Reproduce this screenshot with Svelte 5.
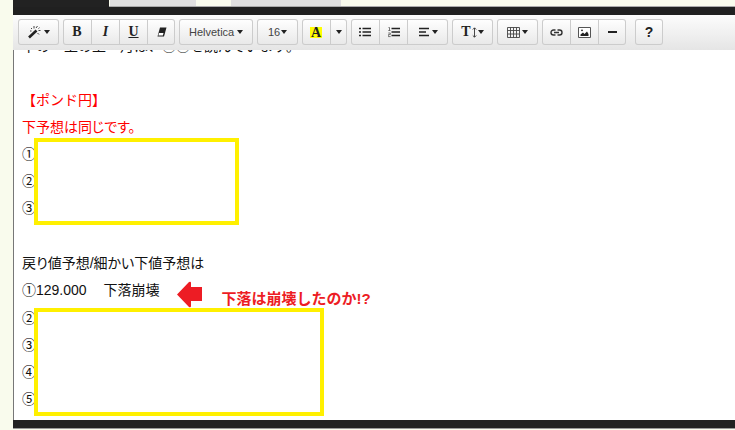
<script>
  const fonts = ['Helvetica', 'Arial', 'Meiryo'];
  const sizes = ['16', '18', '24'];
</script>

<div class="page">
  <nav class="tabs">
    <span class="tab current"></span>
    <span class="tab middle"></span>
    <span class="tab last"></span>
  </nav>
  <main class="editor">
    <div class="toolbar" role="toolbar" aria-label="書式">
      <div class="group">
        <button class="w41" aria-label="スタイル">
          <svg width="14" height="14" viewBox="0 0 14 14"><path d="M1 12.5 8.5 5.5" stroke="#222" stroke-width="2.6" /><path d="M6 3.5V1M8 3 9.5 1M3 3l1 1M10.5 5.5h2M9.5 8l1.5 1.5M2 6h1.5M10.5 3.5l1-.8" stroke="#444" /></svg>
          <i class="caret"></i>
        </button>
      </div>
      <div class="group">
        <button class="w28 serif" aria-label="太字">B</button>
        <button class="w28 serif italic" aria-label="斜体">I</button>
        <button class="w28 serif under" aria-label="下線">U</button>
        <button class="w28" aria-label="書式をクリア">
          <svg width="10" height="10" viewBox="0 0 10 10"><path d="M3 .5h6.5L7 9.5H.5z" fill="#222" /><path d="M2 6h4.5L5.8 8.5H1.3z" fill="#fff" /></svg>
        </button>
      </div>
      <div class="group">
        <label class="pick w74"><select aria-label="フォント">{#each fonts as f}<option>{f}</option>{/each}</select><i class="caret"></i></label>
      </div>
      <div class="group">
        <label class="pick size w41"><select aria-label="文字サイズ">{#each sizes as s}<option>{s}</option>{/each}</select><i class="caret"></i></label>
      </div>
      <div class="group">
        <button class="w28 serif" aria-label="文字色"><span class="mark">A</span></button>
        <button class="w17" aria-label="色を選択"><i class="caret"></i></button>
      </div>
      <div class="group">
        <button class="w28" aria-label="箇条書き">
          <svg width="12" height="10" viewBox="0 0 12 10"><path d="M0 1.5h2M0 5h2M0 8.5h2M3.500 1.5H12M3.500 5H12M3.500 8.5H12" stroke="#222" stroke-width="1.6" /></svg>
        </button>
        <button class="w28" aria-label="番号付きリスト">
          <svg width="12" height="12" viewBox="0 0 12 12"><path d="M3.5 2.5H12M3.5 6H12M3.5 9.5H12" stroke="#222" stroke-width="1.6" /><path d="M.5 1.5h1v3M.3 4.5h2.200M.3 7h2v1.600h-2v2h2.300" fill="none" stroke="#555" stroke-width=".8" /></svg>
        </button>
        <button class="w41" aria-label="段落">
          <svg width="11" height="10" viewBox="0 0 11 10"><path d="M0 1.5h10M0 5h7M0 8.5h10" stroke="#222" stroke-width="1.6" /></svg>
          <i class="caret"></i>
        </button>
      </div>
      <div class="group">
        <button class="w41 serif tight" aria-label="行の高さ">T<svg width="5" height="11" viewBox="0 0 5 11"><path d="M2.5 1v9M.8 2.5 2.5.8l1.7 1.7M.8 8.5l1.7 1.7 1.7-1.7" fill="none" stroke="#333" stroke-width=".9" /></svg><i class="caret"></i></button>
      </div>
      <div class="group">
        <button class="w41" aria-label="表">
          <svg width="13" height="11" viewBox="0 0 13 11"><path d="M.5.5h12v10H.5zM.5 3.5h12M.5 7h12M3.5.5v10M6.5.5v10M9.5.5v10" fill="none" stroke="#444" stroke-width=".9" /></svg>
          <i class="caret"></i>
        </button>
      </div>
      <div class="group">
        <button class="w28" aria-label="リンク">
          <svg width="13" height="7" viewBox="0 0 13 7"><path d="M5.500 1H3.500a2.500 2.500 0 0 0 0 5h2M7.500 1h2a2.500 2.500 0 0 1 0 5h-2M4 3.500h5" fill="none" stroke="#333" stroke-width="1.400" /></svg>
        </button>
        <button class="w28" aria-label="画像">
          <svg width="13" height="11" viewBox="0 0 13 11"><path d="M.5.5h12v10H.5z" fill="#fff" stroke="#555" /><path d="M2.500 9V7.500L5 5.500l1.500 1.500L9 4.500 10.500 7v2z" fill="#222" /><circle cx="4" cy="3.300" r=".9" fill="#222" /></svg>
        </button>
        <button class="w28" aria-label="水平線">
          <svg width="9" height="2" viewBox="0 0 9 2"><path d="M0 1h9" stroke="#222" stroke-width="2" /></svg>
        </button>
      </div>
      <div class="group help"><button class="w28" aria-label="ヘルプ">?</button></div>
    </div>

    <article class="content">
      <p class="scrolled">下の一上の上一月は、①①を読んでいます。</p>
      <p></p>
      <p class="red title">【ポンド円】</p>
      <p class="red">下予想は同じです。</p>
      <div class="masked">
        <p>①</p>
        <p>②</p>
        <p>③</p>
        <div class="frame short"></div>
      </div>
      <p></p>
      <p>戻り値予想/細かい下値予想は</p>
      <p class="call">
        <span>①129.000</span><span class="word">下落崩壊</span>
        <svg class="arrow" width="25" height="27" viewBox="0 0 25 27"><path d="M0 13.500 12 1q2-1 2 1v4h11v14H14v5q0 2-2 1z" fill="#ed1c24" /></svg>
        <strong>下落は崩壊したのか!?</strong>
      </p>
      <div class="masked">
        <p>②</p>
        <p>③</p>
        <p>④</p>
        <p>⑤</p>
        <div class="frame long"></div>
      </div>
    </article>
    <footer></footer>
  </main>
</div>

<style>
  :global(body) {
    margin: 0;
    background: #f9fbed;
  }
  .page {
    padding-left: 13px;
    overflow: hidden;
    font-family: "Liberation Sans", "Noto Sans CJK JP", sans-serif;
    color: #111;
  }
  .tabs {
    display: flex;
    height: 6px;
    border-bottom: 1px solid #aaa;
  }
  .tab {
    background: #e0e0e0;
  }
  .current {
    width: 96px;
    height: 7px;
    background: #222;
  }
  .middle {
    width: 86px;
    margin-left: 1px;
  }
  .last {
    width: 110px;
    margin-left: 35px;
  }
  .editor {
    border-top: 8px solid #202020;
    box-shadow: inset 1px 0 #777;
  }
  .toolbar {
    display: flex;
    gap: 4px;
    height: 30px;
    padding: 4px 5px 1px;
    background: linear-gradient(#fcfcfc, #e5e5e5);
  }
  .group {
    display: flex;
    height: 26px;
    border-radius: 3px;
    background: linear-gradient(#fff, #e8e8e8);
    box-shadow: inset 0 0 0 1px #ccc;
  }
  .help {
    margin-left: 5px;
  }
  button,
  .pick {
    box-sizing: border-box;
    display: flex;
    align-items: center;
    justify-content: center;
    gap: 2px;
    height: 26px;
    padding: 0;
    border: 0;
    background: none;
    color: #222;
    font: 11px "Liberation Sans", sans-serif;
  }
  button + button {
    border-left: 1px solid #ccc;
  }
  .w17 { width: 17px; }
  .w28 { width: 28px; }
  .w41 { width: 41px; }
  .w74 { width: 74px; }
  button.serif {
    font: bold 14px "Liberation Serif", serif;
  }
  button.italic {
    font-style: italic;
  }
  .under {
    text-decoration: underline;
  }
  button.tight {
    gap: 1px;
  }
  .help button {
    font: bold 14px "Liberation Sans", sans-serif;
  }
  .mark {
    padding: 0 1px;
    background: #ff0;
    line-height: 11px;
  }
  .caret {
    border: 3px solid transparent;
    border-top: 4px solid #222;
    border-bottom: 0;
  }
  select {
    appearance: none;
    width: 46px;
    padding: 0;
    border: 0;
    background: none;
    color: #444;
    font: 11px "Liberation Sans", sans-serif;
  }
  .pick.size {
    gap: 0;
  }
  .size select {
    width: 13px;
  }
  .content {
    margin-left: 1px;
    padding: 0 8px 6px;
    overflow: hidden;
    background: #fff;
    font-size: 14px;
    line-height: 27px;
    font-feature-settings: "palt";
  }
  p {
    margin: 0;
    height: 27px;
    white-space: nowrap;
  }
  .scrolled {
    margin-top: -17px;
  }
  .red {
    color: #f00;
  }
  .title,
  .scrolled,
  strong {
    font-feature-settings: normal;
  }
  .masked {
    position: relative;
    margin-bottom: 1px;
  }
  .call + .masked {
    margin-top: 1px;
  }
  .frame {
    position: absolute;
    box-sizing: border-box;
    left: 12px;
    border: 4px solid #fff000;
    background: #fff;
  }
  .short {
    top: -3px;
    width: 205px;
    height: 87px;
  }
  .long {
    top: 3px;
    width: 290px;
    height: 108px;
  }
  .call {
    display: flex;
    align-items: center;
  }
  .word {
    margin-left: 17px;
  }
  .arrow {
    margin: 8px 20px 0 17px;
  }
  strong {
    margin-top: 16px;
    color: #ed1c24;
    font-size: 15px;
  }
  footer {
    height: 8px;
    background: #222;
    border-bottom: 1px solid #999;
  }
</style>
